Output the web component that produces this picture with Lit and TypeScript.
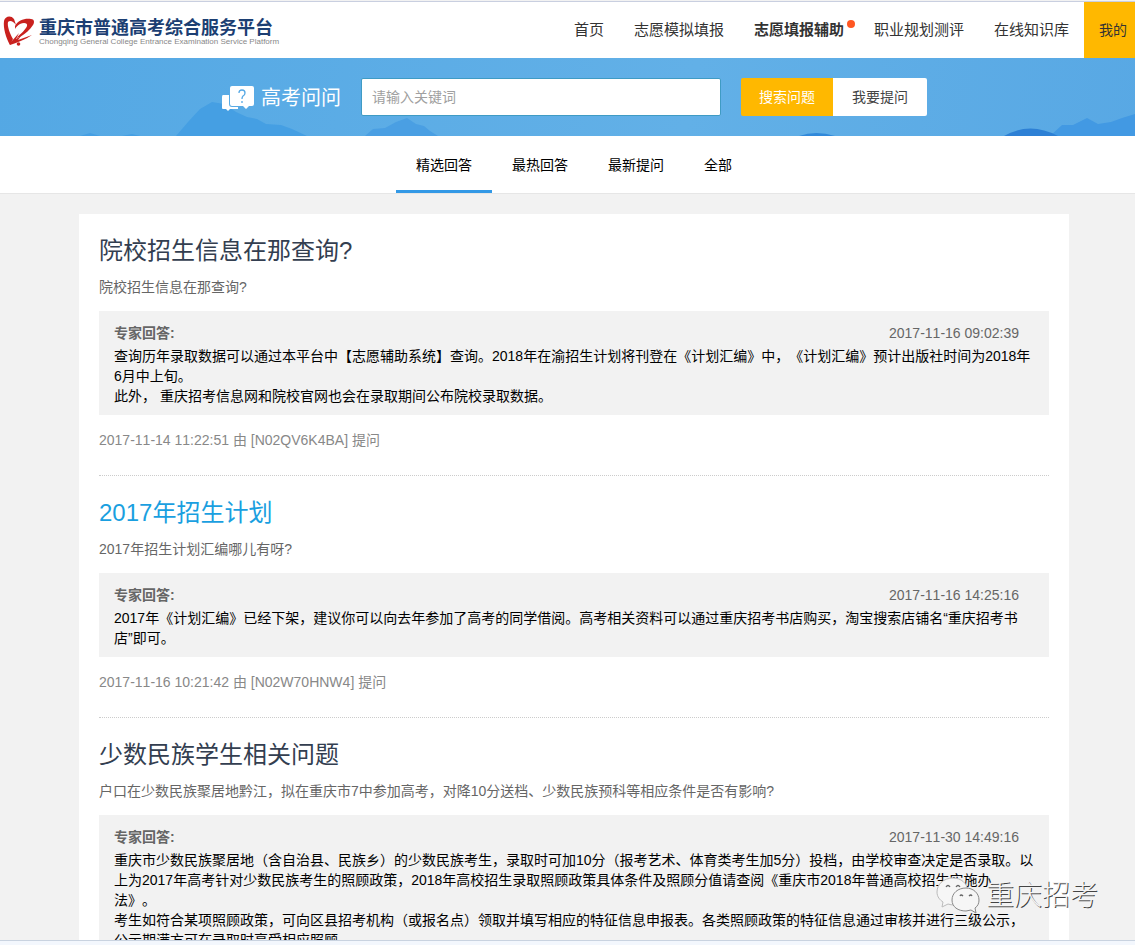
import { LitElement, html, css, svg } from "lit";
import { customElement, property, state } from "lit/decorators.js";

interface Question {
  title: string;
  body: string;
  date: string;
  answer: string[];
  asked: string;
  user: string;
  active?: boolean;
}

const QUESTIONS: Question[] = [
  {
    title: "院校招生信息在那查询?",
    body: "院校招生信息在那查询?",
    date: "2017-11-16 09:02:39",
    answer: [
      "查询历年录取数据可以通过本平台中【志愿辅助系统】查询。2018年在渝招生计划将刊登在《计划汇编》中，《计划汇编》预计出版社时间为2018年6月中上旬。",
      "此外， 重庆招考信息网和院校官网也会在录取期间公布院校录取数据。",
    ],
    asked: "2017-11-14 11:22:51",
    user: "N02QV6K4BA",
  },
  {
    title: "2017年招生计划",
    body: "2017年招生计划汇编哪儿有呀?",
    date: "2017-11-16 14:25:16",
    answer: [
      "2017年《计划汇编》已经下架，建议你可以向去年参加了高考的同学借阅。高考相关资料可以通过重庆招考书店购买，淘宝搜索店铺名“重庆招考书店”即可。",
    ],
    asked: "2017-11-16 10:21:42",
    user: "N02W70HNW4",
    active: true,
  },
  {
    title: "少数民族学生相关问题",
    body: "户口在少数民族聚居地黔江，拟在重庆市7中参加高考，对降10分送档、少数民族预科等相应条件是否有影响?",
    date: "2017-11-30 14:49:16",
    answer: [
      "重庆市少数民族聚居地（含自治县、民族乡）的少数民族考生，录取时可加10分（报考艺术、体育类考生加5分）投档，由学校审查决定是否录取。以上为2017年高考针对少数民族考生的照顾政策，2018年高校招生录取照顾政策具体条件及照顾分值请查阅《重庆市2018年普通高校招生实施办\n法》。",
      "考生如符合某项照顾政策，可向区县招考机构（或报名点）领取并填写相应的特征信息申报表。各类照顾政策的特征信息通过审核并进行三级公示，公示期满方可在录取时享受相应照顾。",
    ],
    asked: "2017-11-30 10:12:08",
    user: "N02Q81KX5C",
  },
];

@customElement("question-item")
class QuestionItem extends LitElement {
  @property({ attribute: false }) item!: Question;

  static styles = css`
    :host { display: block; padding-bottom: 25px; border-bottom: 1px dotted #ccc; }
    .title { margin: 0; padding-top: 20px; font-size: 24px; line-height: 34px; font-weight: 400; }
    .link { color: #333e50; text-decoration: none; }
    .link.active { color: #1a9fe0; }
    .body { margin: 9px 0 14px; color: #666; line-height: 20px; }
    .answer { background: #f2f2f2; padding: 12px 15px 9px; }
    .head { display: flex; justify-content: space-between; padding-right: 15px; margin-bottom: 3px; color: #666; line-height: 20px; }
    .text { margin: 0; color: #000; line-height: 20px; white-space: pre-line; }
    .meta { margin: 15px 0 0; color: #888; line-height: 20px; }
  `;

  render() {
    const q = this.item;
    return html`
      <h2 class="title"><a class="link ${q.active ? "active" : ""}" href="#">${q.title}</a></h2>
      <p class="body">${q.body}</p>
      <section class="answer">
        <div class="head"><strong>专家回答:</strong><time>${q.date}</time></div>
        ${q.answer.map((t) => html`<p class="text">${t}</p>`)}
      </section>
      <p class="meta">${q.asked} 由 [${q.user}] 提问</p>
    `;
  }
}

const heart = svg`
  <g fill="#c9211e">
    <path d="M10 31C6 24 3 14 4 7C5 2 11 1 14 5L16 11C13 7 10 6 8 8C7 12 10 20 13 25Z"/>
    <path d="M15 12C18 6 25 4 31 5C34 5 35 8 33 11C30 16 25 20 20 23L16 24C21 20 26 15 27 12C28 9 24 8 20 10C18 11 16 13 15 15Z"/>
    <path d="M9 27L12 24L11 28L19 19L16 25L21 22L18 26L32 21Q25 26 10 31Z"/>
    <circle cx="18.500" cy="30" r="1.800"/>
  </g>`;

@customElement("app-root")
class AppRoot extends LitElement {
  @state() private tab = 0;

  static styles = css`
    :host {
      display: grid; grid-template-rows: minmax(0, 1fr) auto; height: 100vh; overflow: hidden; position: relative;
      font: 14px/20px "Liberation Sans", "Noto Sans CJK SC", sans-serif; background: #f2f2f2;
      text-spacing-trim: space-all; font-kerning: none;
    }
    .viewport { overflow: hidden; border-top: 1px solid #c9cfe0; margin-top: 1px; }
    .page { min-width: 1148px; }
    .header { display: flex; justify-content: space-between; height: 56px; background: #fff; }
    .brand { display: flex; align-items: center; gap: 3px; color: #1c3f73; text-decoration: none; }
    .name { display: block; font-size: 18px; line-height: 24px; font-weight: 700; font-family: "Noto Sans CJK SC", sans-serif; }
    .latin { display: block; font-size: 8px; line-height: 8px; color: #888; }
    .nav { display: flex; font-size: 15px; }
    .nav-link { display: flex; align-items: center; padding: 0 15px; color: #333; text-decoration: none; position: relative; }
    .nav-link.strong { font-weight: 700; }
    .dot { position: absolute; top: 18px; right: 4px; width: 8px; height: 8px; border-radius: 50%; background: #ff5722; }
    .mine { width: 64px; padding: 0 15px; border: 0; background: #ffb800; color: #333; font: inherit; font-size: 14px; text-align: left; }
    .banner { position: relative; height: 78px; background: linear-gradient(100deg, #54a8e4, #62b0e7 60%, #58a8e4); }
    .hills { position: absolute; inset: 0; width: 100%; height: 100%; }
    .search { position: relative; display: flex; align-items: center; justify-content: center; height: 78px; }
    .ask-title { display: flex; align-items: center; gap: 6px; margin: 0 20px 0 0; padding-top: 2px; color: #fff; font-size: 20px; font-weight: 400; }
    .field { box-sizing: border-box; width: 360px; height: 38px; margin: 0 20px 0 0; padding: 0 10px; border: 1px solid #3f9bc4; border-radius: 2px; font: inherit; color: #333; }
    .field::placeholder { color: #a0a0a0; }
    .btn { height: 38px; width: 92px; padding: 0; border: 0; font: inherit; background: #ffb800; color: #fff; border-radius: 2px 0 0 2px; }
    .btn.plain { width: 94px; background: #fff; color: #444; border-radius: 0 2px 2px 0; }
    .tabs { display: flex; justify-content: center; height: 57px; background: #fff; border-bottom: 1px solid #e6e6e6; }
    .tab { padding: 3px 20px 0; border: 0; border-bottom: 3px solid transparent; background: none; font: inherit; color: #000; }
    .tab.on { border-bottom-color: #3399e6; }
    .list { max-width: 950px; margin: 20px auto 0; padding: 0 20px; background: #fff; }
    .edge { height: 4px; border-top: 1px solid #c9d3e0; background: #f3f7fd; }
    .mark {
      position: absolute; right: 37px; bottom: 29px; display: flex; align-items: center; gap: 6px;
      font-size: 28px; line-height: 40px; font-weight: 300; color: #f4f4f4; text-shadow: 1px 1px 0 #444;
    }
  `;

  render() {
    const tabs = ["精选回答", "最热回答", "最新提问", "全部"];
    return html`
      <div class="viewport"><div class="page">
        <header class="header">
          <a class="brand" href="#">
            <svg width="36" height="33" viewBox="0 0 36 33">${heart}</svg>
            <span><span class="name">重庆市普通高考综合服务平台</span><span class="latin">Chongqing General College Entrance Examination Service Platform</span></span>
          </a>
          <nav class="nav">
            <a class="nav-link" href="#">首页</a>
            <a class="nav-link" href="#">志愿模拟填报</a>
            <a class="nav-link strong" href="#">志愿填报辅助<span class="dot"></span></a>
            <a class="nav-link" href="#">职业规划测评</a>
            <a class="nav-link" href="#">在线知识库</a>
            <button class="mine">我的</button>
          </nav>
        </header>
        <div class="banner">
          <svg class="hills" viewBox="0 0 1148 78" preserveAspectRatio="none">
            <path fill="#459fe3" d="M176 78L188 64L200 51L212 44L224 46L236 54L247 59L257 61L266 66L281 67L292 71L307 78ZM80 78L90 75L100 78ZM122 78L132 76L140 78Z"/>
            <path fill="#4a9fe3" d="M365 78L373 71L385 70L396 64L407 60L416 66L424 68L430 73L438 78Z"/>
            <path fill="#3189da" d="M799 78Q816 72 835 78Z"/>
            <path fill="#4299e3" d="M1050 78L1062 67L1073 67L1087 60L1098 66L1111 64L1122 60L1135 56L1148 52V78Z"/>
            <path fill="#2d80d5" d="M1004 78Q1030 63 1058 78Z"/>
          </svg>
          <form class="search" @submit=${(e: Event) => e.preventDefault()}>
            <h1 class="ask-title">
              <svg width="34" height="27" viewBox="0 0 34 27">
                <path fill="#fff" d="M2 10H8V19Q8 22 11 22H17V24H9L7 26L5 24H2Q1 24 1 23V12Q1 10 2 10Z"/>
                <path fill="#fff" d="M11 1H31Q33 1 33 3V19Q33 21 31 21H28L25 24L22 21H11Q9 21 9 19V3Q9 1 11 1Z"/>
                <path fill="none" stroke="#55a8e5" stroke-width="1.300" d="M18 8Q18 5 21 5Q24 5 24 8Q24 10 22 11Q21 12 21 14M21 16V18"/>
              </svg>
              <span>高考问问</span>
            </h1>
            <input class="field" type="text" aria-label="关键词" placeholder="请输入关键词" />
            <button class="btn" type="submit">搜索问题</button>
            <button class="btn plain" type="button">我要提问</button>
          </form>
        </div>
        <nav class="tabs">
          ${tabs.map((t, i) => html`<button class="tab ${i === this.tab ? "on" : ""}" @click=${() => (this.tab = i)}>${t}</button>`)}
        </nav>
        <main class="list">${QUESTIONS.map((q) => html`<question-item .item=${q}></question-item>`)}</main>
      </div></div>
      <div class="edge"></div>
      <div class="mark">
        <svg width="44" height="38" viewBox="0 0 44 38">
          <path fill="#f6f6f6" stroke="#bbb" d="M17 1C8 1 1 7 1 15C1 20 4 23 7 25L6 30L12 27Q15 28 18 28L32 14C31 6 25 1 17 1Z"/>
          <path fill="#f6f6f6" stroke="#888" d="M30 11C22 11 16 16 16 23C16 30 22 34 30 34L35 33L40 36L39 31C42 29 43 26 43 23C43 16 37 11 30 11Z"/>
          <path fill="none" stroke="#666" stroke-width="1.300" d="M10 10Q12 7 14 10M20 10Q22 7 24 10M24 19Q25 17 27 19M33 19Q35 17 36 19"/>
        </svg>
        <span>重庆招考</span>
      </div>
    `;
  }
}
